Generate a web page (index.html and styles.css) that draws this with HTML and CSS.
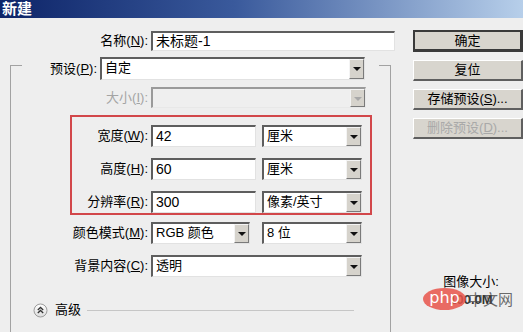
FILE: index.html
```html
<!DOCTYPE html>
<html lang="zh-CN">
<head>
  <meta charset="UTF-8">
  <meta name="viewport" content="width=device-width, initial-scale=1.0">
  <title>新建</title>
  <link rel="stylesheet" href="styles.css">
</head>
<body>
  <div class="titlebar">新建</div>
  <div class="dialog">
    <div class="form">
      <div class="row name-row">
        <label class="lbl">名称(<u>N</u>):</label>
        <div class="field text name-field">未标题-1</div>
      </div>

      <fieldset class="group">
        <legend class="preset">
          <label class="lbl preset-lbl">预设(<u>P</u>):</label>
          <div class="field select preset-field">自定<span class="arrow"></span></div>
        </legend>

        <div class="row size-row">
          <label class="lbl grp-lbl disabled">大小(<u>I</u>):</label>
          <div class="field select off size-field"><span class="arrow"></span></div>
        </div>

        <div class="mark">
          <div class="row">
            <label class="lbl mark-lbl">宽度(<u>W</u>):</label>
            <div class="field text num-field">42</div>
            <div class="field select unit-field">厘米<span class="arrow"></span></div>
          </div>
          <div class="row">
            <label class="lbl mark-lbl">高度(<u>H</u>):</label>
            <div class="field text num-field">60</div>
            <div class="field select unit-field">厘米<span class="arrow"></span></div>
          </div>
          <div class="row">
            <label class="lbl mark-lbl">分辨率(<u>R</u>):</label>
            <div class="field text num-field">300</div>
            <div class="field select unit-field">像素/英寸<span class="arrow"></span></div>
          </div>
        </div>

        <div class="row mode-row">
          <label class="lbl grp-lbl">颜色模式(<u>M</u>):</label>
          <div class="field select mode-field">RGB 颜色<span class="arrow"></span></div>
          <div class="field select bits-field">8 位<span class="arrow"></span></div>
        </div>

        <div class="row bg-row">
          <label class="lbl grp-lbl">背景内容(<u>C</u>):</label>
          <div class="field select bg-field">透明<span class="arrow"></span></div>
        </div>

        <div class="advanced">
          <svg class="adv-icon" width="15" height="15" viewBox="0 0 15 15">
            <defs>
              <linearGradient id="knob" x1="0" y1="0" x2="0" y2="1">
                <stop offset="0" stop-color="#ffffff"/>
                <stop offset="1" stop-color="#dcdcdc"/>
              </linearGradient>
            </defs>
            <circle cx="7.5" cy="7.5" r="6.5" fill="url(#knob)" stroke="#9c9c9c"/>
            <path d="M4.8 7 L7.5 4.5 L10.2 7 M4.8 10 L7.5 7.5 L10.2 10" fill="none" stroke="#333" stroke-width="1.3"/>
          </svg>
          <span class="adv-text">高级</span>
          <span class="adv-line"></span>
        </div>
      </fieldset>
    </div>

    <div class="buttons">
      <div class="btn default">确定</div>
      <div class="btn">复位</div>
      <div class="btn">存储预设(<u>S</u>)...</div>
      <div class="btn disabled">删除预设(<u>D</u>)...</div>
      <div class="info">
        <div>图像大小:</div>
        <div class="info-size">100.0M</div>
      </div>
    </div>
  </div>

  <div class="watermark"><span class="wm-php">php</span><span class="wm-cn">中文网</span></div>
</body>
</html>
```

FILE: styles.css
```css
body {
  margin: 0;
  width: 523px;
  height: 332px;
  overflow: hidden;
  background-color: #eeeeee;
  font-family: "Liberation Sans", "Noto Sans CJK SC", sans-serif;
  font-size: 13px;
  color: #000;
  position: relative;
}
.titlebar {
  height: 18px;
  line-height: 18px;
  padding-left: 2px;
  color: #fff;
  font-weight: bold;
  font-size: 15px;
  background: linear-gradient(to right, #0d2468 0%, #3a5a9c 45%, #b7cfea 100%);
}
.dialog {
  display: flex;
}
.form {
  width: 400px;
}
.row {
  display: flex;
  align-items: center;
}
.lbl {
  text-align: right;
  padding-right: 3px;
  box-sizing: border-box;
  line-height: 16px;
  white-space: nowrap;
}
.lbl.disabled {
  color: #a4a4a4;
}
.name-row {
  margin-top: 13px;
}
.name-row .lbl {
  width: 151px;
}

/* sunken fields */
.field {
  box-sizing: border-box;
  height: 22px;
  background: #fff;
  border-style: solid;
  border-width: 2px 1px 1px 2px;
  border-color: #5e5e5e #e2e2e2 #e2e2e2 #5e5e5e;
  padding-left: 3px;
  line-height: 18px;
  position: relative;
  white-space: nowrap;
}
.text {
  font-size: 14px;
}
.select {
  padding-right: 18px;
}
.arrow {
  position: absolute;
  top: 0;
  right: 0;
  bottom: 0;
  width: 15px;
  box-sizing: border-box;
  background: #d6d3cc;
  border-style: solid;
  border-width: 1px;
  border-color: #f4f4f4 #7a7a7a #7a7a7a #f4f4f4;
}
.arrow::after {
  content: "";
  position: absolute;
  left: 3px;
  top: 7px;
  border-left: 4px solid transparent;
  border-right: 4px solid transparent;
  border-top: 4px solid #111;
}
.field.off {
  background: #efefef;
  border-color: #9a9a9a #e8e8e8 #e8e8e8 #9a9a9a;
}
.field.off .arrow::after {
  border-top-color: #a8a8a8;
}
.name-field {
  width: 244px;
  height: 20px;
  line-height: 16px;
}

/* group frame */
.group {
  margin: 6px 0 0 10px;
  padding: 0 0 20px 0;
  width: 381px;
  box-sizing: border-box;
  border: 1px solid #a2a2a2;
  border-bottom: none;
  min-inline-size: 0;
}
.preset {
  display: flex;
  align-items: flex-start;
  height: 16px;
  margin-left: 11px;
  padding: 0 14px 0 0;
}
.preset-lbl {
  width: 78px;
  line-height: 23px;
}
.preset-field {
  width: 265px;
  height: 23px;
}
.grp-lbl {
  width: 140px;
}
.size-row {
  margin-top: 14px;
}
.size-field {
  width: 215px;
  height: 21px;
}

/* red annotation box */
.mark {
  margin: 7px 0 0 59px;
  width: 302px;
  height: 100px;
  box-sizing: border-box;
  border: 2px solid #d2474a;
  padding-top: 8px;
  display: flex;
  flex-direction: column;
  gap: 11px;
}
.mark-lbl {
  width: 79px;
}
.num-field {
  width: 105px;
}
.unit-field {
  width: 100px;
  margin-left: 6px;
}
.mode-row {
  margin-top: 7px;
}
.mode-field {
  width: 99px;
}
.bits-field {
  width: 100px;
  margin-left: 12px;
}
.bg-row {
  margin-top: 11px;
}
.bg-field {
  width: 211px;
}
.advanced {
  display: flex;
  align-items: center;
  margin: 25px 0 0 22px;
}
.adv-text {
  margin-left: 7px;
  line-height: 16px;
}
.adv-line {
  margin-left: 6px;
  width: 267px;
  height: 1px;
  background: #c6c6c6;
}

/* buttons */
.buttons {
  margin-left: 13px;
  width: 110px;
  padding-top: 12px;
  display: flex;
  flex-direction: column;
  gap: 8px;
}
.btn {
  height: 21px;
  box-sizing: border-box;
  background: #d8d5ce;
  border-style: solid;
  border-width: 1px 2px 2px 1px;
  border-color: #ffffff #5f5f5f #5f5f5f #ffffff;
  text-align: center;
  line-height: 18px;
}
.btn.default {
  height: 22px;
  border: 2px solid #3a3a3a;
  border-right-width: 3px;
  border-bottom-width: 3px;
  line-height: 17px;
}
.btn.disabled {
  color: #a9a9a9;
}
.info {
  margin-top: 127px;
  text-align: center;
  padding-left: 6px;
  line-height: 16px;
}
.info-size {
  font-weight: bold;
  color: #333;
  margin-top: 2px;
}

/* site watermark laid over the dialog */
.watermark {
  position: absolute;
  left: 423px;
  top: 288px;
  display: flex;
  align-items: center;
}
.wm-php {
  display: inline-block;
  width: 43px;
  height: 22px;
  line-height: 20px;
  border-radius: 50%;
  background: rgba(232, 84, 74, 0.85);
  color: #fff;
  text-align: center;
  font-size: 16px;
  font-family: "DejaVu Sans", sans-serif;
}
.wm-cn {
  margin-left: 2px;
  font-size: 15px;
  color: rgba(70, 70, 70, 0.8);
  font-family: "Noto Sans CJK SC", sans-serif;
  line-height: 20px;
}
```
